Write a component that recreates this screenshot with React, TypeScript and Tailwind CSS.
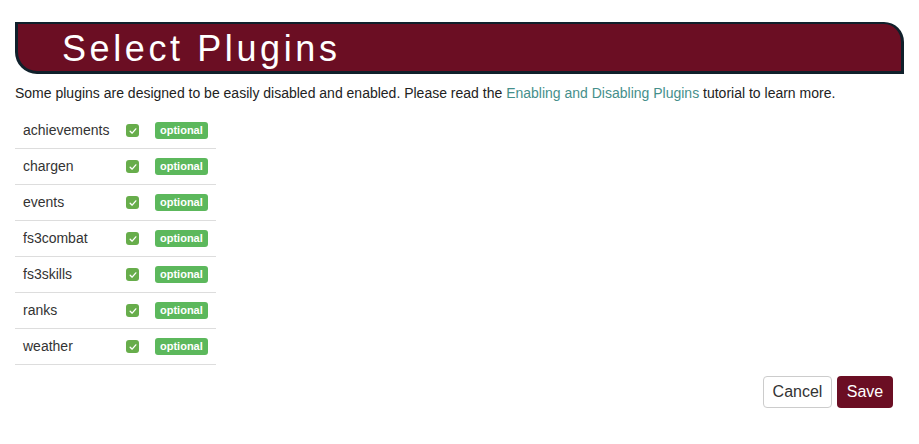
const plugins = ["achievements", "chargen", "events", "fs3combat", "fs3skills", "ranks", "weather"];

function CheckMark() {
  return (
    <span className="flex h-[13px] w-[13px] items-center justify-center rounded-[3px] bg-[#67ad4b]">
      <svg viewBox="0 0 12 12" className="h-[10px] w-[10px]" fill="none" stroke="white" strokeWidth="1.6" strokeLinecap="round" strokeLinejoin="round">
        <path d="M2.6 6.3 L5 8.6 L9.4 3.4" />
      </svg>
    </span>
  );
}

export default function App() {
  return (
    <div className="min-h-screen bg-white px-[15px] pt-[22px] font-['Liberation_Sans',Arial,sans-serif] text-[#333]">
      <div className="flex h-[52px] items-center rounded-tr-[20px] rounded-bl-[22px] border-[3px] border-t-2 border-[#10202b] bg-[#6b0e23] pl-[44px]">
        <h1 className="pt-[2px] text-[36px] leading-none tracking-[0.1em] text-white">Select Plugins</h1>
      </div>

      <p className="mt-[9px] text-[14px] leading-[20px] text-[#222]">
        Some plugins are designed to be easily disabled and enabled. Please read the{" "}
        <a className="text-[#458f8b]" href="#">Enabling and Disabling Plugins</a> tutorial to learn more.
      </p>

      <div className="mt-[10px] w-[201px]">
        {plugins.map((name) => (
          <div key={name} className="flex h-[36px] items-center border-b border-[#dddddd]">
            <span className="w-[111px] pl-2 text-[14px] text-[#333]">{name}</span>
            <CheckMark />
            <span className="ml-[16px] flex h-[17px] items-center rounded-[3px] bg-[#5cb85c] px-[5px] text-[11px] font-bold text-white">
              optional
            </span>
          </div>
        ))}
      </div>

      <div className="mt-[11px] flex justify-end gap-[5px] pr-[11px]">
        <button className="h-[32px] w-[69px] rounded-[4px] border border-[#cccccc] bg-white text-[16px] text-[#333]">
          Cancel
        </button>
        <button className="h-[32px] w-[56px] rounded-[4px] bg-[#6b0e23] text-[16px] text-white">
          Save
        </button>
      </div>
    </div>
  );
}
